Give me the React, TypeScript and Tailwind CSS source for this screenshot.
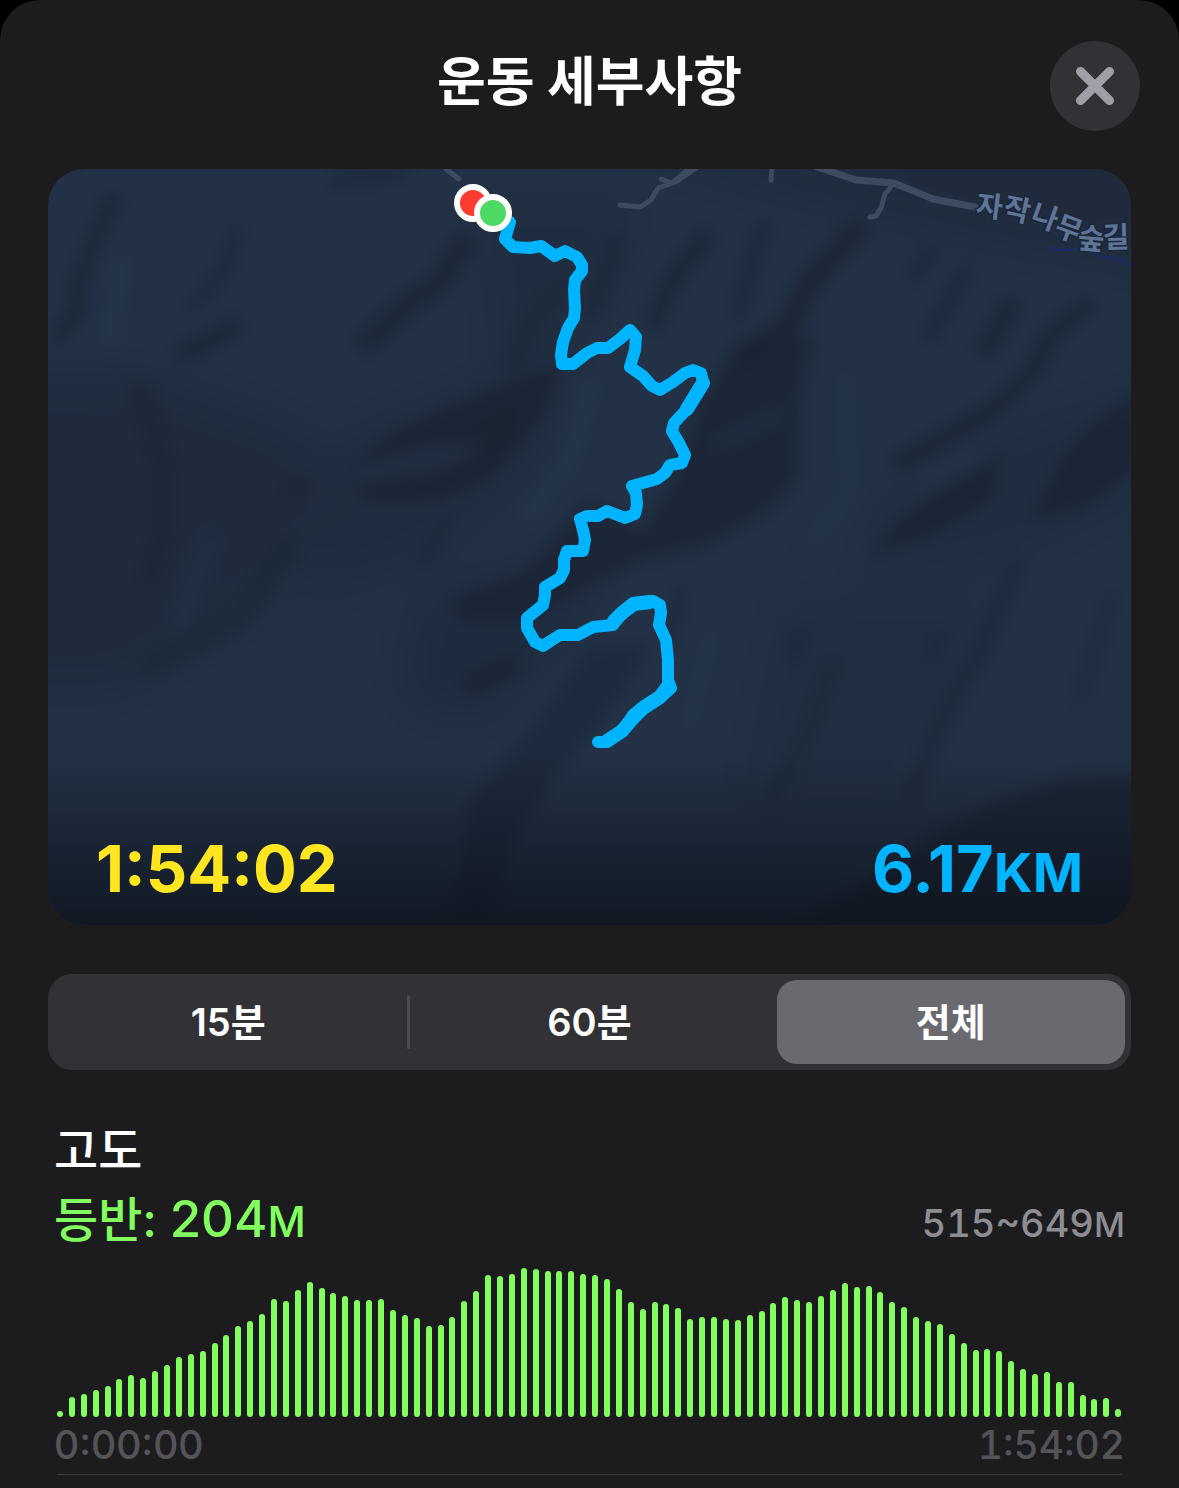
import { useState } from "react";

const ranges = ["15분", "60분", "전체"];

// bar heights in px, one sample every ~77 seconds
const elevation = [
  6, 20, 23, 27, 31, 38, 42, 39, 46, 52, 60, 63, 66, 74, 82, 91, 96, 103,
  118, 116, 127, 135, 129, 124, 121, 117, 117, 118, 107, 102, 99, 91, 92,
  100, 116, 126, 142, 141, 143, 149, 148, 146, 146, 146, 143, 142, 138, 128,
  115, 108, 115, 113, 109, 98, 100, 100, 98, 97, 102, 106, 114, 120, 117,
  115, 121, 127, 134, 130, 131, 125, 115, 110, 100, 96, 93, 83, 74, 67, 68,
  66, 56, 48, 43, 45, 35, 35, 22, 18, 19, 8,
];

const route =
  "510,222 505,239 513,247 530,248 541,246 555,256 565,251 577,257 582,265 582,271 575,280 574,290 575,308 574,318 568,328 563,342 561,355 562,364 573,364 587,353 597,348 608,348 620,339 630,330 636,337 635,350 630,367 643,376 652,386 660,390 673,382 685,373 693,370 701,373 703,382 695,395 688,408 674,423 672,431 679,443 685,455 682,463 670,465 665,473 657,479 632,486 636,493 637,505 635,514 625,518 607,511 598,516 587,516 580,519 583,530 585,540 583,551 567,551 564,560 564,570 560,578 545,587 545,595 543,605 527,618 527,628 535,642 543,646 552,640 560,635 578,635 593,627 613,625 622,612 633,603 653,601 660,605 661,613 659,625 666,640 668,660 668,680 671,688 660,698 643,707 633,715 623,730 607,742 598,742";

function Terrain() {
  return (
    <g filter="url(#soft)">
      {/* broad shading */}
      <g filter="url(#softer)" fill="#1b2636">
        <rect x="-52" y="69" width="1283" height="956" fill="#223145" />
        <path d="M0 375L150 380L300 430L340 500L260 600L120 690L0 690Z" opacity="0.5" />
        <path d="M340 440L560 360L540 470L420 560L300 600Z" opacity="0.4" />
        <path d="M560 130L1180 130L1180 270L1000 240L780 190Z" opacity="0.5" />
        <path d="M880 500L1010 430L1180 380L1180 480L1000 560L860 580Z" opacity="0.3" />
        <path d="M420 600L620 540L560 640L480 720L400 700Z" opacity="0.45" />
        <path d="M480 200L640 200L560 380L500 380Z" opacity="0.3" />
        <path d="M780 600L1000 600L900 800L740 800Z" opacity="0.25" />
      </g>

      {/* ridges and gullies */}
      <g fill="#182231">
        <path d="M352 465L392 432L440 410L495 388L560 365L548 410L525 440L490 478L440 500L370 502L352 488L400 480L450 470L485 445L440 440L400 450Z" opacity="0.7" />
        <path d="M700 400L735 345L815 335L800 400L799 480L769 512L704 548L640 562L590 585L520 622L460 622L450 600L530 568L588 500L640 530L672 480Z" opacity="0.65" />
        <path d="M590 650L650 645L615 700L560 770L520 830L490 925L450 925L470 800L540 720Z" opacity="0.45" />
        <path d="M1003 455L990 500L935 533L870 556L895 524L949 484Z" opacity="0.7" />
        <path d="M1160 375L1100 417L1066 452L1031 518L1080 512L1160 450Z" opacity="0.65" />
        <path d="M1180 770L1180 980L730 980L880 870L940 830L1000 800L1060 780Z" opacity="0.7" />
      </g>
      <g fill="none" stroke="#182231" strokeLinecap="round" strokeLinejoin="round" strokeWidth="14">
        <path d="M113 200L93 245L77 286L79 307L60 334" opacity="0.7" />
        <path d="M234 230L230 262L195 305" opacity="0.35" />
        <path d="M232 328L186 352" strokeWidth="18" opacity="0.6" />
        <path d="M340 180L400 170" strokeWidth="20" opacity="0.4" />
        <path d="M462 245L440 280L392 317L368 341" strokeWidth="24" opacity="0.65" />
        <path d="M560 290L530 320L515 360" strokeWidth="20" opacity="0.4" />
        <path d="M141 390L165 470L165 530L150 575" strokeWidth="26" opacity="0.4" />
        <path d="M306 486L290 490" strokeWidth="18" opacity="0.4" />
        <path d="M289 548L241 617L151 668" strokeWidth="26" opacity="0.35" />
        <path d="M445 525L425 560" opacity="0.4" />
        <path d="M513 665L472 685" strokeWidth="20" opacity="0.7" />
        <path d="M617 245L592 310" strokeWidth="18" opacity="0.5" />
        <path d="M704 238L669 286L655 320" strokeWidth="18" opacity="0.65" />
        <path d="M762 228L738 314" opacity="0.45" />
        <path d="M858 230L824 265L803 293L790 325L745 355" strokeWidth="24" opacity="0.7" />
        <path d="M930 255L915 275" opacity="0.5" />
        <path d="M966 272L945 307L930 335" opacity="0.5" />
        <path d="M1010 307L987 348" strokeWidth="20" opacity="0.65" />
        <path d="M1086 307L1052 334L1035 369L997 407L955 431L900 462" strokeWidth="18" opacity="0.65" />
        <path d="M1017 565L980 651L945 710L910 800" opacity="0.45" />
        <path d="M940 640L932 650M798 545L795 555M798 635L794 655" opacity="0.4" />
        <path d="M832 665L805 740L770 800" opacity="0.35" />
        <path d="M682 590L668 640" strokeWidth="10" opacity="0.5" />
        <path d="M1110 600L1080 700" opacity="0.3" />
      </g>
      <g fill="none" stroke="#26384e" strokeLinecap="round" strokeWidth="20">
        <path d="M120 265L112 340" opacity="0.5" />
        <path d="M210 540L180 620" opacity="0.4" />
        <path d="M590 385L570 460L530 510" opacity="0.5" />
        <path d="M717 445L783 412" strokeWidth="9" opacity="0.5" />
        <path d="M925 482L975 460" strokeWidth="12" opacity="0.5" />
        <path d="M845 380L850 500L790 560" opacity="0.4" />
        <path d="M710 640L690 720" opacity="0.4" />
      </g>
    </g>
  );
}

function RouteMap() {
  return (
    <svg
      className="block h-full w-full"
      viewBox="48 169 1083 756"
      preserveAspectRatio="xMidYMid slice"
      role="img"
      aria-label="운동 경로"
    >
      <defs>
        <filter id="soft" colorInterpolationFilters="sRGB">
          <feGaussianBlur stdDeviation="8" />
        </filter>
        <filter id="softer" colorInterpolationFilters="sRGB">
          <feGaussianBlur stdDeviation="24" />
        </filter>
        <linearGradient id="fade" x1="0" y1="0" x2="0" y2="1">
          <stop offset="0" stopColor="#0d121c" stopOpacity="0" />
          <stop offset="1" stopColor="#0d121c" stopOpacity="0.8" />
        </linearGradient>
      </defs>

      <Terrain />

      {/* roads */}
      <g
        fill="none"
        stroke="#3d4a60"
        strokeWidth="5"
        strokeLinecap="round"
        strokeLinejoin="round"
      >
        <path d="M446 169L459 179" />
        <path d="M620 205L640 207L651 200L658 188L676 182L699 166M661 179L672 183L690 168" />
        <path d="M772 169L771 180" />
        <path d="M870 217L876 216L881 208L885 194L893 184" />
        <path d="M817 167L856 180L894 183L933 199L975 207" strokeWidth="7" />
      </g>
      <path
        d="M1050 248L1062 250L1080 249L1100 256L1118 259L1132 266"
        fill="none"
        stroke="#1d2b6a"
        strokeWidth="2"
      />
      <text
        x="975 1002 1029 1053 1077 1103"
        y="215 217 222 234 248 248"
        rotate="7 12 20 20 5 -2"
        className="fill-[#5f7496] stroke-[#1c2839] stroke-[3px] font-['Noto_Sans_CJK_KR',sans-serif] text-[29px] font-bold [paint-order:stroke]"
      >
        자작나무숲길
      </text>

      {/* track */}
      <g fill="none" stroke="#00b4ff" strokeLinecap="round" strokeLinejoin="round">
        <polyline points={route} strokeWidth="12" />
        <path
          d="M703 383L695 396L687 409M668 686L660 697L643 708L633 718L622 731L607 741M614 621L622 613L634 604L650 602"
          strokeWidth="14"
        />
      </g>

      <rect x="48" y="755" width="1083" height="170" fill="url(#fade)" />

      <g stroke="#fff" strokeWidth="6">
        <circle cx="473" cy="203" r="16" fill="#ff3b30" />
        <circle cx="493" cy="213" r="16" fill="#4cd964" />
      </g>
    </svg>
  );
}

export default function App() {
  const [range, setRange] = useState("전체");

  return (
    <div className="min-h-screen bg-black font-['Inter','Noto_Sans_CJK_KR',sans-serif] text-white">
      <main className="min-h-screen rounded-t-[40px] bg-[#1c1c1e]">
        <header className="grid grid-cols-[90px_1fr_90px] items-center px-[39px] pt-[41px] pb-[38px]">
          <h1 className="col-start-2 pb-2 text-center text-[53px] leading-[64px] font-bold">
            운동 세부사항
          </h1>
          <button
            type="button"
            aria-label="닫기"
            className="flex h-[90px] w-[90px] items-center justify-center rounded-full bg-[#323136]"
          >
            <svg viewBox="0 0 40 40" className="h-10 w-10" aria-hidden="true">
              <path
                d="M5.5 5.5L34.5 34.5M34.5 5.5L5.5 34.5"
                stroke="#a09fa7"
                strokeWidth="9"
                strokeLinecap="round"
              />
            </svg>
          </button>
        </header>

        <div className="px-12">
          <section className="relative aspect-[1083/756] overflow-hidden rounded-[36px]">
            <RouteMap />
            <div className="absolute inset-x-12 bottom-5 flex items-baseline justify-between text-[65px] leading-[64px] font-bold">
              <span className="text-[#ffe620]">1:54:02</span>
              <span className="text-[#00b4ff]">
                6.17<span className="text-[54px]">KM</span>
              </span>
            </div>
          </section>

          <div className="mt-[49px] flex h-24 items-center gap-[5px] rounded-[24px] bg-[#323136] p-[6px]">
            {ranges.map((label, i) => (
              <div key={label} className="contents">
                {i > 0 && (
                  <span
                    className={`h-[54px] w-[3px] rounded-full ${
                      i === 1 ? "bg-[#4b4a50]" : "bg-transparent"
                    }`}
                  />
                )}
                <button
                  type="button"
                  aria-pressed={range === label}
                  onClick={() => setRange(label)}
                  className={`h-full flex-1 rounded-[20px] text-[38px] leading-[48px] font-semibold ${
                    range === label ? "bg-[#6a696f]" : ""
                  }`}
                >
                  {label}
                </button>
              </div>
            ))}
          </div>
        </div>

        <section className="px-[54px] pt-[49px]">
          <h2 className="text-[48px] leading-[64px] font-medium">고도</h2>
          <div className="flex items-baseline justify-between">
            <p className="text-[48px] leading-[72px] font-medium text-[#82ff5f]">
              등반: <span className="text-[51px]">204</span>
              <span className="text-[42px]">M</span>
            </p>
            <p className="text-[38px] font-medium text-[#8e8d94] tabular-nums">
              515~649<span className="text-[34px]">M</span>
            </p>
          </div>

          <div className="mx-[3px] mt-[9px] flex h-[150px] items-end justify-between">
            {elevation.map((h, i) => (
              <span
                key={i}
                className="w-[6px] rounded-full bg-[#82ff5f]"
                style={{ height: h }}
              />
            ))}
          </div>

          <div className="flex justify-between pt-1 pb-[5px] text-[39px] leading-[48px] font-medium text-[#545358]">
            <span>0:00:00</span>
            <span className="tabular-nums">1:54:02</span>
          </div>
          <hr className="mx-[3px] border-[#3a3a3d]" />
        </section>
      </main>
    </div>
  );
}
